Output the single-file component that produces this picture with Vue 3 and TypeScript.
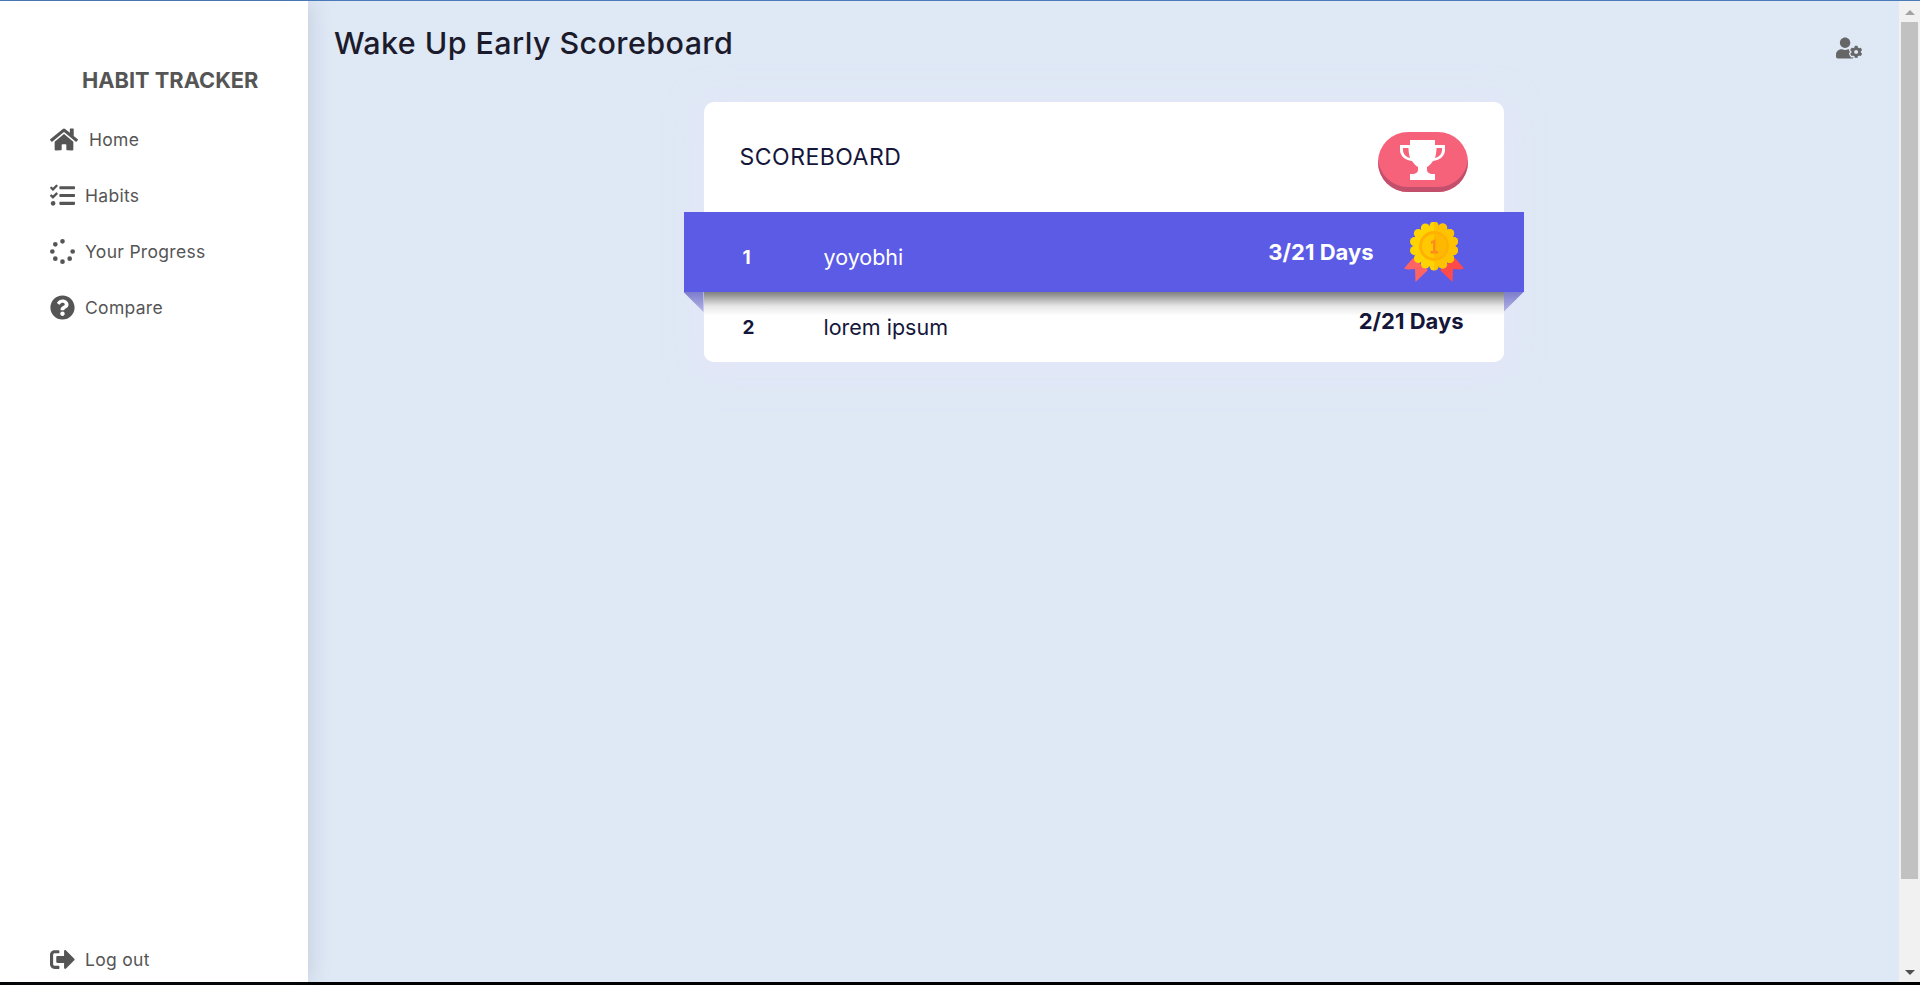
<script setup lang="ts">
interface NavItem {
  label: string;
  icon: string;
  box: string;
}

const navItems: NavItem[] = [
  { label: "Habits", box: "0 0 512 512", icon: "M139.61 35.5a12 12 0 0 0-17 0L58.93 98.81l-22.7-22.12a12 12 0 0 0-17 0L3.53 92.41a12 12 0 0 0 0 17l47.59 47.4a12.78 12.78 0 0 0 17.61 0l15.59-15.62L156.52 69a12.09 12.09 0 0 0 .09-17zm0 159.19a12 12 0 0 0-17 0l-63.68 63.72-22.7-22.1a12 12 0 0 0-17 0L3.53 252a12 12 0 0 0 0 17L51 316.5a12.77 12.77 0 0 0 17.6 0l15.7-15.69 72.2-72.22a12 12 0 0 0 .09-16.9zM64 368c-26.49 0-48.59 21.5-48.59 48S37.53 464 64 464a48 48 0 0 0 0-96zm432 16H208a16 16 0 0 0-16 16v32a16 16 0 0 0 16 16h288a16 16 0 0 0 16-16v-32a16 16 0 0 0-16-16zm0-320H208a16 16 0 0 0-16 16v32a16 16 0 0 0 16 16h288a16 16 0 0 0 16-16V80a16 16 0 0 0-16-16zm0 160H208a16 16 0 0 0-16 16v32a16 16 0 0 0 16 16h288a16 16 0 0 0 16-16v-32a16 16 0 0 0-16-16z" },
  { label: "Your Progress", box: "0 0 512 512", icon: "M304 48a48 48 0 1 1-96 0 48 48 0 0 1 96 0zM256 416a48 48 0 1 0 0 96 48 48 0 0 0 0-96zM464 208a48 48 0 1 0 0 96 48 48 0 0 0 0-96zM96 256a48 48 0 1 0-96 0 48 48 0 0 0 96 0zM108.9 355.1a48 48 0 1 0 0 96 48 48 0 0 0 0-96zM403.1 355.1a48 48 0 1 0 0 96 48 48 0 0 0 0-96zM108.9 60.9a48 48 0 1 0 0 96 48 48 0 0 0 0-96z" },
  { label: "Compare", box: "0 0 512 512", icon: "M504 256c0 136.997-111.043 248-248 248S8 392.997 8 256C8 119.083 119.043 8 256 8s248 111.083 248 248zM262.655 90c-54.497 0-89.255 22.957-116.549 63.758-3.536 5.286-2.353 12.415 2.715 16.258l34.699 26.31c5.205 3.947 12.621 3.008 16.665-2.122 17.864-22.658 30.113-35.797 57.303-35.797 20.429 0 45.698 13.148 45.698 32.958 0 14.976-12.363 22.667-32.534 33.976C247.128 238.528 216 254.941 216 296v4c0 6.627 5.373 12 12 12h56c6.627 0 12-5.373 12-12v-1.333c0-28.462 83.186-29.647 83.186-106.667 0-58.002-60.165-102-116.531-102zM256 338c-25.365 0-46 20.635-46 46 0 25.364 20.635 46 46 46s46-20.636 46-46c0-25.365-20.635-46-46-46z" },
];

// scalloped edge of the medal
const bumps = Array.from({ length: 14 }, (_, i) => {
  const a = (i / 14) * Math.PI * 2;
  return { x: 30 + 20 * Math.sin(a), y: 24 - 20 * Math.cos(a) };
});
</script>

<template>
  <div class="page">
    <div class="top-line"></div>
    <div class="shell">
      <aside class="sidebar">
        <h1 class="brand">HABIT TRACKER</h1>
        <nav class="nav">
          <a class="nav-item home">
            <svg class="home-icon" viewBox="0 0 576 512" fill="currentColor">
              <path d="M280.37 148.26L96 300.11V464a16 16 0 0 0 16 16l112.06-.29a16 16 0 0 0 15.92-16V368a16 16 0 0 1 16-16h64a16 16 0 0 1 16 16v95.64a16 16 0 0 0 16 16.05L464 480a16 16 0 0 0 16-16V300L295.67 148.26a12.19 12.19 0 0 0-15.3 0zM571.6 251.47L488 182.56V44.05a12 12 0 0 0-12-12h-56a12 12 0 0 0-12 12v72.61L318.47 43a48 48 0 0 0-61 0L4.34 251.47a12 12 0 0 0-1.6 16.9l25.5 31A12 12 0 0 0 45.15 301l235.22-193.74a12.19 12.19 0 0 1 15.3 0L530.9 301a12 12 0 0 0 16.9-1.6l25.5-31a12 12 0 0 0-1.7-16.93z" />
            </svg>
            Home
          </a>
          <a v-for="item in navItems" :key="item.label" class="nav-item">
            <svg class="icon" :viewBox="item.box" fill="currentColor"><path :d="item.icon" /></svg>
            {{ item.label }}
          </a>
        </nav>
        <a class="nav-item logout">
          <svg class="icon" viewBox="0 0 512 512" fill="currentColor">
            <path d="M497 273L329 441c-15 15-41 4.5-41-17v-96H152c-13.3 0-24-10.7-24-24v-96c0-13.3 10.7-24 24-24h136V88c0-21.4 25.9-32 41-17l168 168c9.3 9.4 9.3 24.6 0 34zM192 436v-40c0-6.6-5.4-12-12-12H96c-17.7 0-32-14.3-32-32V160c0-17.7 14.3-32 32-32h84c6.6 0 12-5.4 12-12V76c0-6.6-5.4-12-12-12H96c-53 0-96 43-96 96v192c0 53 43 96 96 96h84c6.6 0 12-5.4 12-12z" />
          </svg>
          Log out
        </a>
      </aside>

      <main class="main">
        <header class="header">
          <h2 class="title">Wake Up Early Scoreboard</h2>
          <svg class="user-icon" viewBox="0 0 640 512" fill="currentColor">
            <path d="M610.5 373.3c2.6-14.1 2.6-28.5 0-42.6l25.8-14.9c3-1.7 4.3-5.2 3.3-8.5-6.7-21.6-18.2-41.2-33.2-57.4-2.3-2.5-6-3.1-9-1.4l-25.8 14.9c-10.9-9.3-23.4-16.5-36.9-21.3v-29.8c0-3.4-2.4-6.4-5.7-7.1-22.3-5-45-4.8-66.2 0-3.3.7-5.7 3.7-5.7 7.1v29.8c-13.5 4.8-26 12-36.9 21.3l-25.8-14.9c-2.9-1.7-6.7-1.1-9 1.4-15 16.2-26.5 35.8-33.2 57.4-1 3.3.4 6.8 3.3 8.5l25.8 14.9c-2.6 14.1-2.6 28.5 0 42.6l-25.8 14.9c-3 1.7-4.3 5.2-3.3 8.5 6.7 21.6 18.2 41.1 33.2 57.4 2.3 2.5 6 3.1 9 1.4l25.8-14.9c10.9 9.3 23.4 16.5 36.9 21.3v29.8c0 3.4 2.4 6.4 5.7 7.1 22.3 5 45 4.8 66.2 0 3.3-.7 5.7-3.7 5.7-7.1v-29.8c13.5-4.8 26-12 36.9-21.3l25.8 14.9c2.9 1.7 6.7 1.1 9-1.4 15-16.2 26.5-35.8 33.2-57.4 1-3.3-.4-6.8-3.3-8.5l-25.8-14.9zM496 400.5c-26.8 0-48.5-21.8-48.5-48.5s21.8-48.5 48.5-48.5 48.5 21.8 48.5 48.5-21.7 48.5-48.5 48.5zM224 256c70.7 0 128-57.3 128-128S294.7 0 224 0 96 57.3 96 128s57.3 128 128 128zm201.2 226.5c-2.3-1.2-4.6-2.6-6.8-3.9l-7.9 4.6c-6 3.4-12.8 5.3-19.6 5.3-10.9 0-21.4-4.6-28.9-12.6-18.3-19.8-32.3-43.9-40.2-69.6-5.5-17.7 1.9-36.4 17.9-45.7l7.9-4.6c-.1-2.6-.1-5.2 0-7.8l-7.9-4.6c-16-9.2-23.4-28-17.9-45.7.9-2.9 2.2-5.8 3.2-8.7-3.8-.3-7.5-1.2-11.4-1.2h-16.7c-22.2 10.2-46.9 16-72.9 16s-50.6-5.8-72.9-16h-16.7C60.2 288 0 348.2 0 422.4V464c0 26.5 21.5 48 48 48h352c10.1 0 19.5-3.2 27.2-8.5-1.2-3.8-2-7.7-2-11.8v-9.2z" />
          </svg>
        </header>

        <section class="card">
          <div class="card-head">
            <span class="card-title">SCOREBOARD</span>
            <button class="trophy-btn" type="button">
              <svg class="trophy" viewBox="0 0 45 40" fill="#fff">
                <path fill-rule="evenodd" d="M10 0H35V5H45V10C45 16 40 20 33 21C31 24 29 26 27 27V30C27 32 29 34 33 34H35V40H10V34H12C16 34 18 32 18 30V27C16 26 14 24 12 21C5 20 0 16 0 10V5H10ZM3 8V10C3 14 6 17 10 18C9 15 8.500 11 8.500 8ZM42 8H36.500C36.500 11 36 15 35 18C39 17 42 14 42 10Z" />
              </svg>
            </button>
          </div>

          <div class="row first">
            <span class="rank">1</span>
            <span class="name">yoyobhi</span>
            <span class="days">3/21 Days</span>
            <svg class="medal" viewBox="0 0 60 60">
              <defs>
                <clipPath id="right-half"><rect x="30" y="0" width="30" height="48" /></clipPath>
              </defs>
              <path d="M9 36L0 46.500L4 47.500L11 47L11.500 60L24 48Z" fill="#ff6464" />
              <path d="M51 36L60 46.500L56 47.500L49 47L48.500 60L36 48Z" fill="#ff4a4a" />
              <g fill="#ffd400">
                <circle v-for="(b, i) in bumps" :key="i" :cx="b.x" :cy="b.y" r="4.500" />
                <circle cx="30" cy="24" r="20.500" />
              </g>
              <g fill="#ffc200" clip-path="url(#right-half)">
                <circle v-for="(b, i) in bumps" :key="i" :cx="b.x" :cy="b.y" r="4.500" />
                <circle cx="30" cy="24" r="20.500" />
              </g>
              <circle cx="30" cy="24" r="15" fill="#ffb000" />
              <circle cx="30" cy="24" r="12" fill="#ffc800" />
              <path d="M30 12a12 12 0 0 1 0 24Z" fill="#ffb800" />
              <path d="M27 19.500L31.500 17V29H34V31.500H26.500V29H29V21L27 22Z" fill="#ff8a1e" />
            </svg>
          </div>

          <div class="row second">
            <span class="rank">2</span>
            <span class="name">lorem ipsum</span>
            <span class="days">2/21 Days</span>
          </div>
        </section>
      </main>

      <div class="scrollbar">
        <span class="arrow up"></span>
        <div class="thumb"></div>
        <span class="arrow down"></span>
      </div>
    </div>
    <div class="bottom-line"></div>
  </div>
</template>

<style>
html,
body {
  margin: 0;
  overflow: hidden;
}
</style>

<style scoped>
.page {
  display: flex;
  flex-direction: column;
  height: 985px;
  font-family: "Inter", "Liberation Sans", sans-serif;
  background: #dfe8f5;
}

.top-line {
  height: 1px;
  background: #4a7ab8;
}

.bottom-line {
  height: 3px;
  background: #000;
}

.shell {
  flex: 1;
  display: flex;
  min-height: 0;
}

.sidebar {
  position: relative;
  z-index: 1;
  width: 308px;
  padding: 0 0 0 50px;
  box-sizing: border-box;
  display: flex;
  flex-direction: column;
  background: #fff;
  box-shadow: 0 0 22px rgba(60, 80, 110, 0.2);
}

.brand {
  margin: 65px 0 17px 32px;
  font-size: 21.800px;
  line-height: 28px;
  font-weight: 700;
  color: #555;
}

.nav {
  flex: 1;
  display: flex;
  flex-direction: column;
}

.nav-item {
  height: 56px;
  display: flex;
  align-items: center;
  gap: 10px;
  font-size: 17.500px;
  letter-spacing: 0.3px;
  color: #555;
}

.nav-item.home {
  gap: 11px;
}

.icon {
  width: 25px;
  height: 25px;
  flex: none;
}

.home-icon {
  width: 28px;
  height: 25px;
  flex: none;
}

.logout {
  height: 43px;
  padding-bottom: 1px;
}

.main {
  flex: 1;
  min-width: 0;
}

.header {
  height: 85px;
  padding: 20px 37px 0 26px;
  box-sizing: border-box;
  display: flex;
  justify-content: space-between;
}

.title {
  margin: 0;
  font-size: 30.500px;
  line-height: 44px;
  font-weight: 500;
  letter-spacing: 0.4px;
  color: #1b1b2b;
}

.user-icon {
  margin-top: 16px;
  width: 26px;
  height: 22px;
  color: #666;
}

.card {
  width: 800px;
  margin: 16px auto 0;
  background: #fff;
  border-radius: 10px;
  box-shadow: 0 5px 30px 10px rgba(235, 228, 255, 0.35);
  color: #14163a;
}

.card-head {
  height: 110px;
  padding: 0 36px;
  display: flex;
  align-items: center;
  justify-content: space-between;
}

.card-title {
  font-size: 23px;
  letter-spacing: 0.5px;
  margin-top: -1px;
}

.trophy-btn {
  width: 90px;
  height: 60px;
  margin-top: 10px;
  padding: 0 0 5px;
  border: 0;
  border-radius: 30px;
  background: #f7627b;
  box-shadow: inset 0 -5px 0 #c2506c;
  display: flex;
  align-items: center;
  justify-content: center;
}

.trophy {
  width: 45px;
  height: 40px;
}

.row {
  display: flex;
  align-items: center;
  position: relative;
}

.rank {
  width: 81px;
  font-weight: 700;
  font-size: 19px;
}

.name {
  flex: 1;
  font-size: 21.500px;
}

.days {
  font-size: 22px;
  font-weight: 700;
}

.first {
  height: 80px;
  margin: 0 -20px;
  padding: 0 60px 0 59px;
  background: #5b5be6;
  color: #fff;
}

.first::before,
.first::after {
  content: "";
  position: absolute;
  top: 100%;
  width: 20px;
  height: 20px;
  background: linear-gradient(#7d7dcc, #b4b4e6);
}

.first::before {
  left: 0;
  clip-path: polygon(0 0, 100% 0, 100% 100%);
}

.first::after {
  right: 0;
  clip-path: polygon(0 0, 100% 0, 0 100%);
}

.first .rank,
.first .name {
  margin-top: 10px;
}

.medal {
  width: 60px;
  height: 60px;
  margin: 0 0 0 30px;
}

.second {
  height: 70px;
  padding: 0 40px 0 39px;
  border-radius: 0 0 10px 10px;
  background: linear-gradient(#7f7f7f, #e6e6e6 14px, #fff 24px);
}

.second .days {
  margin-top: -12px;
}

.second .name {
  margin-top: -1px;
}

.scrollbar {
  width: 21px;
  flex: none;
  background: #f1f1f1;
  display: flex;
  flex-direction: column;
  align-items: center;
}

.arrow {
  flex: none;
  width: 0;
  height: 0;
  border-left: 5px solid transparent;
  border-right: 5px solid transparent;
}

.arrow.up {
  margin: 9px 0 7px;
  border-bottom: 5px solid #a3a3a3;
}

.thumb {
  flex: none;
  width: 17px;
  height: 857px;
  background: #c1c1c1;
}

.arrow.down {
  margin-top: auto;
  margin-bottom: 7px;
  border-top: 5px solid #505050;
}
</style>
